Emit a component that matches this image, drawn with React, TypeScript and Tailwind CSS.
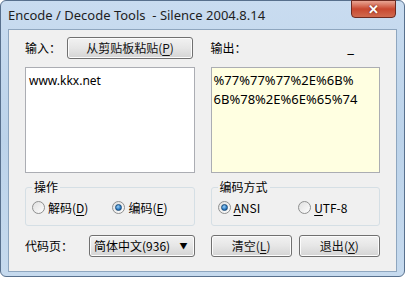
import React from "react";

const font = { fontFamily: '"Noto Sans CJK SC", "Noto Sans", sans-serif' };

function Btn({ label, u, rest, className }: { label: string; u: string; rest: string; className: string }) {
  return (
    <div
      className={`flex items-center justify-center rounded-[3px] border border-[#707070] bg-gradient-to-b from-[#f2f2f2] via-[#e6e6e6] to-[#d4d4d4] text-[12px] text-[#111] shadow-[inset_0_0_0_1px_#fcfcfc] ${className}`}
    >
      {label}
      <span>(</span>
      <span className="underline underline-offset-2">{u}</span>
      <span>{rest}</span>
    </div>
  );
}

function Radio({ checked, children }: { checked?: boolean; children: React.ReactNode }) {
  return (
    <div className="flex items-center gap-[3px] text-[12px]">
      <span className="flex h-[13px] w-[13px] items-center justify-center rounded-full border border-[#8e8f8f] bg-gradient-to-br from-[#e0e0e0] to-[#fdfdfd]">
        {checked && (
          <span className="h-[7px] w-[7px] rounded-full border border-[#1b4d7a] bg-[radial-gradient(circle_at_40%_35%,#9ad0f5,#2a79c4_60%,#0f3c6e)]" />
        )}
      </span>
      {children}
    </div>
  );
}

function Group({ title, children }: { title: string; children: React.ReactNode }) {
  return (
    <div className="relative mt-[14px] h-[39px] rounded-[3px] border border-[#d5dfe5]">
      <span className="absolute -top-[9px] left-[6px] bg-[#f0f0f0] px-[2px] text-[12px] leading-[16px]">{title}</span>
      <div className="flex h-full items-center pl-[6px] pt-[2px]">{children}</div>
    </div>
  );
}

export default function App() {
  return (
    <div className="h-[282px] w-[405px] bg-white" style={font}>
      <div className="flex h-[277px] w-[405px] flex-col rounded-[6px] border border-[#58708d] bg-gradient-to-b from-[#c9dcf0] via-[#bcd3ea] to-[#c6daee] px-[7px] text-[#000]">
        <div className="flex h-[28px] shrink-0 items-start justify-between">
          <div className="pt-[5px] text-[13px] leading-[18px] text-[#1e1e1e]" style={{ fontFamily: '"Noto Sans", "Open Sans", sans-serif' }}>
            Encode / Decode Tools&nbsp;&nbsp;- Silence 2004.8.14
          </div>
          <div className="-mt-px mr-px flex h-[18px] w-[45px] items-center justify-center rounded-b-[4px] border border-[#6d2a20] bg-gradient-to-b from-[#e8a493] via-[#c8472f] to-[#d06a4f] text-[13px] font-bold text-white [text-shadow:0_0_2px_#5a1b10]">
            ✕
          </div>
        </div>
        <div className="flex h-[243px] flex-col border border-[#8ea6bf] bg-[#f0f0f0] px-[16px] pt-[7px] text-[12px]">
          <div className="grid grid-cols-2 gap-x-[16px]">
            <div className="flex h-[22px] items-center">
              <span className="w-[42px]">输入：</span>
              <Btn label="从剪贴板粘贴" u="P" rest=")" className="h-[22px] w-[126px]" />
            </div>
            <div className="flex h-[22px] items-center justify-between">
              <span>输出：</span>
              <span className="mr-[26px] text-[12px] font-bold">_</span>
            </div>
            <div className="mt-[8px] h-[106px] border border-[#abadb3] bg-white px-[3px] pt-[3px] leading-[19px]" style={{ fontFamily: '"Noto Sans", sans-serif' }}>
              www.kkx.net
            </div>
            <div className="mt-[8px] h-[106px] break-all border border-[#abadb3] bg-[#ffffe1] px-[2px] pt-[3px] text-[13px] leading-[19px]" style={{ fontFamily: '"Noto Sans", sans-serif' }}>
              %77%77%77%2E%6B%
              <br />
              6B%78%2E%6E%65%74
            </div>
            <Group title="操作">
              <Radio>
                <span>
                  解码(<span className="underline underline-offset-2">D</span>)
                </span>
              </Radio>
              <div className="w-[24px]" />
              <Radio checked>
                <span>
                  编码(<span className="underline underline-offset-2">E</span>)
                </span>
              </Radio>
            </Group>
            <Group title="编码方式">
              <Radio checked>
                <span>
                  <span className="underline underline-offset-2">A</span>NSI
                </span>
              </Radio>
              <div className="w-[38px]" />
              <Radio>
                <span>
                  <span className="underline underline-offset-2">U</span>TF-8
                </span>
              </Radio>
            </Group>
            <div className="mt-[9px] flex h-[22px] items-center">
              <span className="w-[64px]">代码页：</span>
              <div className="flex h-[22px] flex-1 items-center justify-between rounded-[3px] border border-[#707070] bg-gradient-to-b from-[#f2f2f2] via-[#e6e6e6] to-[#d4d4d4] pl-[4px] pr-[6px] shadow-[inset_0_0_0_1px_#fcfcfc]">
                <span>简体中文(936)</span>
                <span className="text-[8px]">▼</span>
              </div>
            </div>
            <div className="mt-[9px] flex h-[22px] items-center gap-[7px]">
              <Btn label="清空" u="L" rest=")" className="h-[22px] flex-1" />
              <Btn label="退出" u="X" rest=")" className="h-[22px] flex-1" />
            </div>
          </div>
        </div>
      </div>
    </div>
  );
}
